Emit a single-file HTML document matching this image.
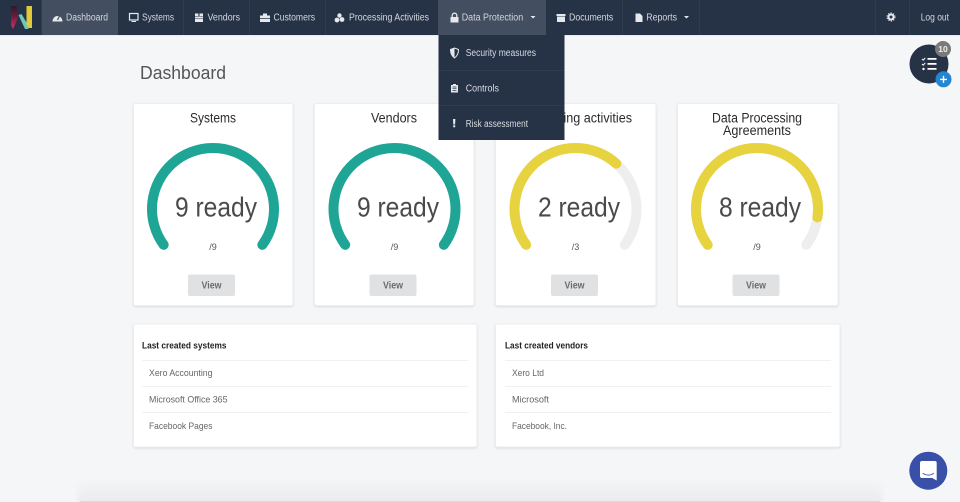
<!DOCTYPE html>
<html lang="en"><head><meta charset="utf-8"><title>Dashboard</title>
<style>
html,body{margin:0;padding:0;width:960px;height:502px;overflow:hidden;background:#f4f6f8}
svg{display:block;position:absolute;left:0;top:0}
text{font-family:"Liberation Sans",sans-serif}
.n{font-size:10px;fill:#d3d7dd}
.d{font-size:10px;fill:#d8dbe0}
.t{font-size:13.5px;fill:#2b2b2b;text-anchor:middle}
.r{font-size:28px;fill:#4a4a4a;text-anchor:middle}
.s{font-size:9px;fill:#555;text-anchor:middle}
.v{font-size:10px;fill:#6b6b6b;text-anchor:middle;font-weight:bold}
.h{font-size:9px;fill:#222;font-weight:bold}
.i{font-size:9.2px;fill:#666}
.card{fill:#fff;stroke:#eceef0;stroke-width:1;filter:drop-shadow(0 1px 1px rgba(0,0,0,.10))}
.tr{fill:none;stroke:#eeeeee;stroke-width:10;stroke-linecap:round}
.gt{fill:none;stroke:#1fa595;stroke-width:10;stroke-linecap:round}
.gy{fill:none;stroke:#e6d33f;stroke-width:10;stroke-linecap:round}
.btn{fill:#e0e1e2}
.sep{stroke:#f0f1f2;stroke-width:1}
.nsep{stroke:#2f3b50;stroke-width:1}
.ic{fill:#e6e8eb}
</style></head>
<body>
<svg width="960" height="502" viewBox="0 0 960 502" xmlns="http://www.w3.org/2000/svg">
<defs>
<linearGradient id="bot" x1="0" y1="0" x2="0" y2="1"><stop offset="0" stop-color="#f4f6f8"/><stop offset="1" stop-color="#e7e8ea"/></linearGradient>
<filter id="bl" x="-5%" y="-50%" width="110%" height="200%"><feGaussianBlur stdDeviation="3"/></filter>
<linearGradient id="lg" x1="0" y1="0" x2="0" y2="1"><stop offset="0" stop-color="#2c1a2a"/><stop offset=".45" stop-color="#6a1c3c"/><stop offset="1" stop-color="#e02a66"/></linearGradient>
</defs>
<rect width="960" height="502" fill="#f4f6f8"/>
<rect x="78" y="478" width="804" height="30" fill="url(#bot)" filter="url(#bl)"/>
<rect x="80" y="501" width="800" height="1" fill="#d9dadc"/>

<!-- nav -->
<rect width="960" height="35" fill="#263347"/>
<rect y="35" width="960" height="1" fill="#e8eaec"/>
<rect x="42" width="76" height="35" fill="#434e60"/>
<rect x="438" width="108" height="35" fill="#434e60"/>
<path class="nsep" d="M41.500 0V35M183.500 0V35M249.500 0V35M325.500 0V35M622.500 0V35M699.500 0V35M875.500 0V35M909.500 0V35"/>
<!-- logo -->
<path d="M11 6h5.500l1.500 12-5 11-2-4z" fill="url(#lg)"/>
<path d="M18.500 15l3-1 6.500 11 .5 4h-3.500z" fill="#6fc6bd"/>
<path d="M26.500 6H32v22h-3.500l-2-4z" fill="#e2c93a"/>

<!-- nav icons -->
<path class="ic" d="M52.500 21.500a5 5.500 0 1 1 10 0z"/><path d="M57.500 20l2-4" stroke="#434e60" stroke-width="1.200"/>
<path d="M129.500 13.500h8.500v6.500h-8.500z" fill="none" stroke="#e6e8eb" stroke-width="1.200"/><path class="ic" d="M131.500 21h4.500v1h-4.500z"/>
<path class="ic" d="M195 13.500h3.400v2.500h-3.400zM199.500 13.500h3.500v2.500h-3.500zM195 16.500h8v2h-8zM195 19h8v3h-8z"/>
<path class="ic" d="M260 15.500h3v-2h4v2h3v2.500h-10zM260 18.700h10v3.300h-10z"/>
<circle class="ic" cx="339.500" cy="15.500" r="2.200"/><circle class="ic" cx="342" cy="19.500" r="2.400"/><circle class="ic" cx="337" cy="20" r="2.400"/>
<path class="ic" d="M450.500 17h8v5.500h-8z"/><path d="M452.200 17v-1.500a2.300 2.300 0 0 1 4.600 0V17" fill="none" stroke="#e6e8eb" stroke-width="1.300"/>
<path class="ic" d="M530.500 16h5l-2.500 2.500zM684 16h5l-2.500 2.500z"/>
<path class="ic" d="M556.500 14h9v2h-9zM557 16.500h8v5.500h-8z"/>
<path class="ic" d="M635.500 13.500h4.500l2.500 2.500v6h-7z"/>
<circle cx="891" cy="17" r="2.500" fill="none" stroke="#e6e8eb" stroke-width="2"/><circle cx="891" cy="17" r="4" fill="none" stroke="#e6e8eb" stroke-width="1" stroke-dasharray="1.300 1.300"/>

<!-- nav text -->
<text class="n" x="66" y="20.500" textLength="42" lengthAdjust="spacingAndGlyphs">Dashboard</text>
<text class="n" x="142" y="20.500" textLength="32" lengthAdjust="spacingAndGlyphs">Systems</text>
<text class="n" x="207.500" y="20.500" textLength="32.500" lengthAdjust="spacingAndGlyphs">Vendors</text>
<text class="n" x="273.500" y="20.500" textLength="41.500" lengthAdjust="spacingAndGlyphs">Customers</text>
<text class="n" x="349" y="20.500" textLength="80" lengthAdjust="spacingAndGlyphs">Processing Activities</text>
<text class="n" x="461.700" y="20.500" textLength="61.500" lengthAdjust="spacingAndGlyphs">Data Protection</text>
<text class="n" x="569" y="20.500" textLength="44.300" lengthAdjust="spacingAndGlyphs">Documents</text>
<text class="n" x="646.300" y="20.500" textLength="30.700" lengthAdjust="spacingAndGlyphs">Reports</text>
<text class="n" x="920.700" y="20.500" textLength="28.300" lengthAdjust="spacingAndGlyphs">Log out</text>

<text x="140" y="79" font-size="18" fill="#555" textLength="86" lengthAdjust="spacingAndGlyphs">Dashboard</text>

<!-- cards -->
<rect class="card" x="133.500" y="103.500" width="159.500" height="202" rx="2"/>
<rect class="card" x="314.500" y="103.500" width="159.500" height="202" rx="2"/>
<rect class="card" x="495.500" y="103.500" width="160.500" height="202" rx="2"/>
<rect class="card" x="677.500" y="103.500" width="160.500" height="202" rx="2"/>

<text class="t" x="213" y="122.500" textLength="46" lengthAdjust="spacingAndGlyphs">Systems</text>
<text class="t" x="394" y="122.500" textLength="46" lengthAdjust="spacingAndGlyphs">Vendors</text>
<text class="t" x="575" y="122.500" textLength="114" lengthAdjust="spacingAndGlyphs">Processing activities</text>
<text class="t" x="757" y="122.500" textLength="90" lengthAdjust="spacingAndGlyphs">Data Processing</text>
<text class="t" x="757" y="135" textLength="68" lengthAdjust="spacingAndGlyphs">Agreements</text>

<g transform="translate(213,209)"><path class="gt" d="M-49.350 35.850A61 61 0 1 1 49.350 35.850"/></g>
<g transform="translate(394.500,209)"><path class="gt" d="M-49.350 35.850A61 61 0 1 1 49.350 35.850"/></g>
<g transform="translate(575.500,209)"><path class="tr" d="M-49.350 35.850A61 61 0 1 1 49.350 35.850"/><path class="gy" pathLength="100" stroke-dasharray="66.670 200" d="M-49.350 35.850A61 61 0 1 1 49.350 35.850"/></g>
<g transform="translate(757,209)"><path class="tr" d="M-49.350 35.850A61 61 0 1 1 49.350 35.850"/><path class="gy" pathLength="100" stroke-dasharray="88.890 200" d="M-49.350 35.850A61 61 0 1 1 49.350 35.850"/></g>

<text class="r" x="216" y="216.500" textLength="82" lengthAdjust="spacingAndGlyphs">9 ready</text>
<text class="r" x="398" y="216.500" textLength="82" lengthAdjust="spacingAndGlyphs">9 ready</text>
<text class="r" x="579" y="216.500" textLength="82" lengthAdjust="spacingAndGlyphs">2 ready</text>
<text class="r" x="760" y="216.500" textLength="82" lengthAdjust="spacingAndGlyphs">8 ready</text>

<text class="s" x="213" y="250">/9</text>
<text class="s" x="394.500" y="250">/9</text>
<text class="s" x="575.500" y="250">/3</text>
<text class="s" x="757" y="250">/9</text>

<rect class="btn" x="188" y="274.500" width="47" height="21.500" rx="2"/>
<rect class="btn" x="369.500" y="274.500" width="47" height="21.500" rx="2"/>
<rect class="btn" x="551" y="274.500" width="47" height="21.500" rx="2"/>
<rect class="btn" x="732.500" y="274.500" width="47" height="21.500" rx="2"/>
<text class="v" x="211.500" y="288.500" textLength="20" lengthAdjust="spacingAndGlyphs">View</text>
<text class="v" x="393" y="288.500" textLength="20" lengthAdjust="spacingAndGlyphs">View</text>
<text class="v" x="574.500" y="288.500" textLength="20" lengthAdjust="spacingAndGlyphs">View</text>
<text class="v" x="756" y="288.500" textLength="20" lengthAdjust="spacingAndGlyphs">View</text>

<!-- dropdown -->
<rect x="438.500" y="35" width="126" height="105" fill="#263347"/>
<path class="nsep" d="M438.500 70.500H564.500M438.500 105.500H564.500"/>
<!-- shield: left half solid, right half outlined -->
<path d="M450.500 49.500l4-1.500 4 1.500c0 3.700-1.200 6.500-4 8.500-2.800-2-4-4.800-4-8.500z" fill="none" stroke="#e6e8eb" stroke-width="1"/>
<path class="ic" d="M454.500 48l-4 1.500c0 3.700 1.200 6.500 4 8.500z"/>
<!-- clipboard -->
<path class="ic" d="M451 85h2v-1h3v1h2v7.500h-7z"/>
<path d="M452.500 87h4M452.500 88.700h4M452.500 90.400h4" stroke="#263347" stroke-width=".7"/>
<!-- exclamation -->
<path class="ic" d="M453 119h2.400l-.3 5.500h-1.800zM453.200 125.300h2v2h-2z"/>
<text class="d" x="465.700" y="56" textLength="70.300" lengthAdjust="spacingAndGlyphs">Security measures</text>
<text class="d" x="465.700" y="91.500" textLength="33.300" lengthAdjust="spacingAndGlyphs">Controls</text>
<text class="d" x="465.700" y="127" textLength="62.300" lengthAdjust="spacingAndGlyphs">Risk assessment</text>

<!-- lists -->
<rect class="card" x="133.500" y="324" width="343.500" height="123" rx="2"/>
<rect class="card" x="495.500" y="324" width="344.500" height="123" rx="2"/>
<path class="sep" d="M142 360.500H468M142 386.500H468M142 412.500H468M505 360.500H831M505 386.500H831M505 412.500H831"/>
<text class="h" x="142" y="348.500" textLength="84.500" lengthAdjust="spacingAndGlyphs">Last created systems</text>
<text class="h" x="505" y="348.500" textLength="83" lengthAdjust="spacingAndGlyphs">Last created vendors</text>
<text class="i" x="149" y="376" textLength="63.500" lengthAdjust="spacingAndGlyphs">Xero Accounting</text>
<text class="i" x="149" y="402.500" textLength="78.500" lengthAdjust="spacingAndGlyphs">Microsoft Office 365</text>
<text class="i" x="149" y="429" textLength="63.500" lengthAdjust="spacingAndGlyphs">Facebook Pages</text>
<text class="i" x="512" y="376" textLength="32" lengthAdjust="spacingAndGlyphs">Xero Ltd</text>
<text class="i" x="512" y="402.500" textLength="37" lengthAdjust="spacingAndGlyphs">Microsoft</text>
<text class="i" x="512" y="429" textLength="55" lengthAdjust="spacingAndGlyphs">Facebook, Inc.</text>

<!-- floating task button -->
<circle cx="929" cy="64" r="19.500" fill="#263347"/>
<path d="M922 59l1.200 1.200 2-2.200M922 64l1.200 1.200 2-2.200" fill="none" stroke="#fff" stroke-width="1"/>
<circle cx="923.500" cy="69" r="1.200" fill="#fff"/>
<path d="M927.500 58h9v1.700h-9zM927.500 63h9v1.700h-9zM927.500 68h9v1.700h-9z" fill="#fff"/>
<circle cx="943" cy="49" r="8" fill="#7a7a7a"/>
<text x="943" y="52" font-size="8.500" font-weight="bold" fill="#f0f0f0" text-anchor="middle">10</text>
<circle cx="943.500" cy="79.300" r="8" fill="#2486d0"/>
<path d="M940 78.700h7v1.400h-7zM942.800 75.900h1.400v7h-1.400z" fill="#fff"/>

<!-- chat -->
<circle cx="928.300" cy="470.700" r="19" fill="#3a4fa8"/>
<path d="M922 461h12.700a2 2 0 0 1 2 2v17.500l-4.500-2.500H922a2 2 0 0 1-2-2v-13a2 2 0 0 1 2-2z" fill="#fff"/>
<path d="M923 473.500c3.500 2 7.500 2 10.500 0" fill="none" stroke="#3a4fa8" stroke-width="1" stroke-linecap="round"/>
</svg>
</body></html>
